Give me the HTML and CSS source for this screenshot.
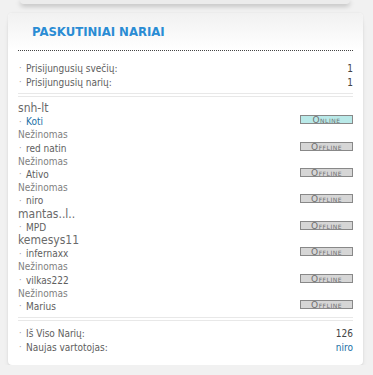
FILE: index.html
```html
<!DOCTYPE html>
<html lang="lt">
<head>
    <meta charset="UTF-8">
    <title>Paskutiniai nariai</title>
    <link rel="stylesheet" href="styles.css">
</head>
<body>
    <div class="prev-box"></div>

    <div class="panel">
        <div class="panel-head">
            <h2>PASKUTINIAI NARIAI</h2>
        </div>
        <div class="panel-body">
            <div class="stat"><span class="dot">·</span><span class="label">Prisijungusių svečių:</span><span class="val">1</span></div>
            <div class="stat"><span class="dot">·</span><span class="label">Prisijungusių narių:</span><span class="val">1</span></div>

            <div class="sep"></div>

            <div class="member">
                <div class="rank big">snh-lt</div>
                <div class="who"><span class="dot">·</span><span class="name on">Koti</span><span class="badge online">Online</span></div>
            </div>
            <div class="member">
                <div class="rank">Nežinomas</div>
                <div class="who"><span class="dot">·</span><span class="name">red natin</span><span class="badge">Offline</span></div>
            </div>
            <div class="member">
                <div class="rank">Nežinomas</div>
                <div class="who"><span class="dot">·</span><span class="name">Ativo</span><span class="badge">Offline</span></div>
            </div>
            <div class="member">
                <div class="rank">Nežinomas</div>
                <div class="who"><span class="dot">·</span><span class="name">niro</span><span class="badge">Offline</span></div>
            </div>
            <div class="member">
                <div class="rank big">mantas..l..</div>
                <div class="who"><span class="dot">·</span><span class="name">MPD</span><span class="badge">Offline</span></div>
            </div>
            <div class="member">
                <div class="rank big">kemesys11</div>
                <div class="who"><span class="dot">·</span><span class="name">infernaxx</span><span class="badge">Offline</span></div>
            </div>
            <div class="member">
                <div class="rank">Nežinomas</div>
                <div class="who"><span class="dot">·</span><span class="name">vilkas222</span><span class="badge">Offline</span></div>
            </div>
            <div class="member">
                <div class="rank">Nežinomas</div>
                <div class="who"><span class="dot">·</span><span class="name">Marius</span><span class="badge">Offline</span></div>
            </div>

            <div class="sep"></div>

            <div class="stat"><span class="dot">·</span><span class="label">Iš Viso Narių:</span><span class="val">126</span></div>
            <div class="stat"><span class="dot">·</span><span class="label">Naujas vartotojas:</span><span class="val link">niro</span></div>
        </div>
    </div>
</body>
</html>
```

FILE: styles.css
```css
body {
    margin: 0;
    background-color: #f1f1f1;
    font-family: "DejaVu Sans Condensed", "DejaVu Sans", Verdana, sans-serif;
    font-stretch: condensed;
    color: #5e5e5e;
}

/* bottom of the box above */
.prev-box {
    height: 4px;
    margin: 0 23px 9px 20px;
    background-color: #ececec;
    border-radius: 0 0 4px 4px;
    box-shadow: 0 2px 5px rgba(0, 0, 0, 0.25);
}

.panel {
    width: 355px;
    margin-left: 8px;
    background-color: #fff;
    border-radius: 4px;
    box-shadow: 0 0 2px rgba(0, 0, 0, 0.08), 0 6px 6px -3px rgba(0, 0, 0, 0.22);
    padding-bottom: 11px;
}

.panel-head {
    height: 37px;
    padding-left: 24px;
    background: linear-gradient(#f1f1f1, #fff);
    border-radius: 4px 4px 0 0;
    display: flex;
    align-items: center;
}

.panel-head h2 {
    margin: 0;
    font-size: 13px;
    font-weight: bold;
    color: #2a8cd4;
}

.panel-body {
    margin: 0 10px;
    padding-top: 10px;
    border-top: 1px dotted #444;
}

.stat,
.who {
    display: flex;
    align-items: center;
    height: 14px;
    font-size: 10px;
}

.dot {
    width: 7px;
    padding-left: 1px;
    color: #999;
    font-size: 9px;
}

.label,
.name {
    flex: 1;
}

.val {
    color: #444;
}

.val.link,
.name.on {
    color: #1a6fa6;
}

.sep {
    height: 2px;
    margin: 4px 0 5px;
    border: 1px solid #e8e8e8;
    border-left: 0;
    border-right: 0;
}

.member {
    height: 26.4px;
}

.rank {
    height: 13px;
    line-height: 13px;
    font-size: 10px;
    color: #808080;
}

.rank.big {
    font-size: 12px;
    color: #6a6a6a;
}

.who {
    height: 13.4px;
}

.badge {
    width: 51px;
    height: 7px;
    margin-top: -4px;
    border: 1px solid #888;
    background-color: #d6d6d6;
    color: #707070;
    font-family: "DejaVu Sans", sans-serif;
    font-stretch: normal;
    font-size: 9px;
    line-height: 8px;
    letter-spacing: 0.5px;
    font-variant: small-caps;
    text-align: center;
}

.badge.online {
    background-color: #b9e9e8;
}
```
